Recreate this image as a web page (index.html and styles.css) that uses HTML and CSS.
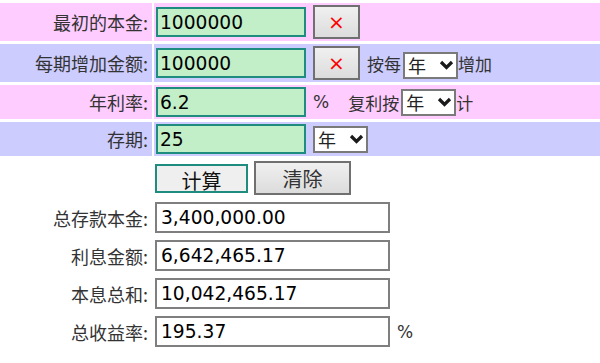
FILE: index.html
```html
<!DOCTYPE html>
<html lang="zh-CN">
<head>
  <meta charset="UTF-8">
  <title>复利计算器</title>
  <link rel="stylesheet" href="styles.css">
</head>
<body>
  <div class="calc">
    <div class="row pink">
      <div class="label">最初的本金:</div>
      <div class="field">
        <input class="num" type="text" value="1000000">
        <button class="btn-x" type="button">×</button>
      </div>
    </div>

    <div class="row blue">
      <div class="label">每期增加金额:</div>
      <div class="field">
        <input class="num" type="text" value="100000">
        <button class="btn-x" type="button">×</button>
        <span class="txt gap-l">按每</span>
        <span class="select low">
          <select><option>年</option><option>月</option></select>
          <svg width="15" height="10" viewBox="0 0 15 10"><path d="M2 2 L7.5 7.5 L13 2" fill="none" stroke="#1a1a1a" stroke-width="3.2"/></svg>
        </span>
        <span class="txt">增加</span>
      </div>
    </div>

    <div class="row pink">
      <div class="label">年利率:</div>
      <div class="field">
        <input class="num" type="text" value="6.2">
        <span class="pct">%</span>
        <span class="txt gap-l2">复利按</span>
        <span class="select">
          <select><option>年</option><option>月</option></select>
          <svg width="15" height="10" viewBox="0 0 15 10"><path d="M2 2 L7.5 7.5 L13 2" fill="none" stroke="#1a1a1a" stroke-width="3.2"/></svg>
        </span>
        <span class="txt">计</span>
      </div>
    </div>

    <div class="row blue">
      <div class="label">存期:</div>
      <div class="field">
        <input class="num" type="text" value="25">
        <span class="select gap-l">
          <select><option>年</option><option>月</option></select>
          <svg width="15" height="10" viewBox="0 0 15 10"><path d="M2 2 L7.5 7.5 L13 2" fill="none" stroke="#1a1a1a" stroke-width="3.2"/></svg>
        </span>
      </div>
    </div>

    <div class="row">
      <div class="label"></div>
      <div class="field tight">
        <button class="btn-calc" type="button">计算</button>
        <button class="btn-clear" type="button">清除</button>
      </div>
    </div>

    <div class="row">
      <div class="label">总存款本金:</div>
      <div class="field tight"><input class="out" type="text" value="3,400,000.00" readonly></div>
    </div>
    <div class="row">
      <div class="label">利息金额:</div>
      <div class="field tight"><input class="out" type="text" value="6,642,465.17" readonly></div>
    </div>
    <div class="row">
      <div class="label">本息总和:</div>
      <div class="field tight"><input class="out" type="text" value="10,042,465.17" readonly></div>
    </div>
    <div class="row">
      <div class="label">总收益率:</div>
      <div class="field tight">
        <input class="out" type="text" value="195.37" readonly>
        <span class="pct">%</span>
      </div>
    </div>
  </div>
</body>
</html>
```

FILE: styles.css
```css
body {
  margin: 0;
  font-family: "Noto Sans CJK SC", sans-serif;
  background-color: #fff;
  color: #333;
}

.calc {
  display: flex;
  flex-direction: column;
  gap: 3px;
  padding-top: 3px;
}

.row {
  display: grid;
  grid-template-columns: 152px 1fr;
  column-gap: 2px;
}

.pink .label, .pink .field {
  background-color: #ffccff;
}

.blue .label, .blue .field {
  background-color: #ccccff;
}

.label {
  display: flex;
  align-items: center;
  justify-content: flex-end;
  padding-right: 4px;
  font-size: 18px;
  color: #333;
}

.field {
  display: flex;
  align-items: center;
  padding: 2px 0 2px 2px;
}

.field.tight {
  padding-left: 1px;
}

.num {
  box-sizing: border-box;
  width: 150px;
  height: 30px;
  border: 2px solid #1e8c7e;
  background-color: #c2efc8;
  font-family: "DejaVu Sans", sans-serif;
  font-size: 14pt;
  color: #000;
  padding: 0 2px;
  margin: 0;
}

.out {
  box-sizing: border-box;
  width: 235px;
  height: 31px;
  border: 2px solid #7f7f7f;
  background-color: #fff;
  font-family: "DejaVu Sans", sans-serif;
  font-size: 14pt;
  color: #000;
  padding: 0 4px;
  margin: 0;
}

.btn-x {
  box-sizing: border-box;
  width: 47px;
  height: 34px;
  margin: 0 0 0 7px;
  border: 2px solid #707070;
  background: linear-gradient(#f0f0f0, #dcdcdc);
  color: #f00;
  font-family: "DejaVu Sans", sans-serif;
  font-size: 20px;
  padding: 0;
  flex: none;
}

.btn-calc {
  box-sizing: border-box;
  width: 93px;
  height: 29px;
  margin: 0;
  border: 2px solid #1e8c7e;
  background-color: #efefef;
  font-family: "Noto Sans CJK SC", sans-serif;
  font-size: 20px;
  color: #111;
  padding: 0;
}

.btn-clear {
  box-sizing: border-box;
  width: 97px;
  height: 34px;
  margin: 0 0 0 6px;
  border: 2px solid #707070;
  background: linear-gradient(#f0f0f0, #dcdcdc);
  font-family: "Noto Sans CJK SC", sans-serif;
  font-size: 20px;
  color: #333;
  padding: 0;
}

.txt {
  font-size: 17px;
  color: #333;
  flex: none;
}

.pct {
  font-family: "DejaVu Sans", sans-serif;
  font-size: 17px;
  color: #333;
  margin-left: 7px;
}

.gap-l {
  margin-left: 7px;
}

.gap-l2 {
  margin-left: 19px;
}

.select {
  position: relative;
  display: inline-flex;
  flex: none;
  width: 55px;
  margin-left: 2px;
}

.select.gap-l {
  margin-left: 7px;
}

.select.low {
  margin-top: 5px;
}

.select select {
  -webkit-appearance: none;
  appearance: none;
  box-sizing: border-box;
  width: 55px;
  height: 27px;
  border: 2px solid #7a7a7a;
  border-radius: 0;
  background-color: #fff;
  font-family: "Noto Sans CJK SC", sans-serif;
  font-size: 18px;
  color: #222;
  padding: 0 0 0 3px;
  margin: 0;
  line-height: 23px;
}

.select svg {
  position: absolute;
  right: 4px;
  top: 8px;
  pointer-events: none;
}
```
